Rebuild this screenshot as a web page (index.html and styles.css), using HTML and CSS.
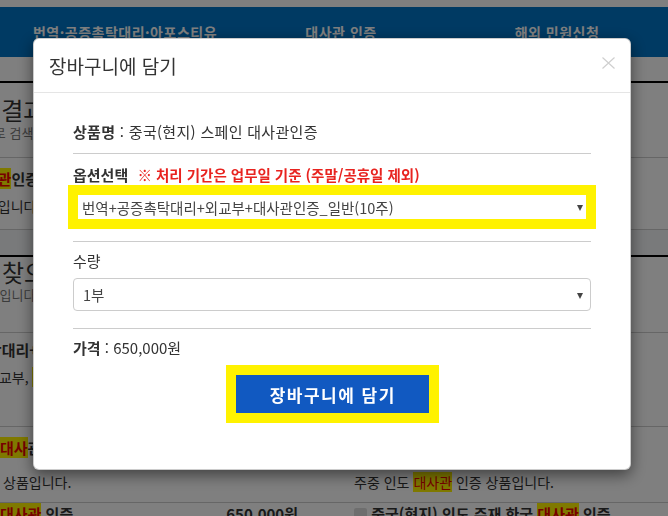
FILE: index.html
```html
<!DOCTYPE html>
<html lang="ko">
<head>
    <meta charset="utf-8">
    <title>장바구니에 담기</title>
    <link rel="stylesheet" href="styles.css">
</head>
<body>

    <div class="top-bar"></div>
    <div class="gnb">
        <a>번역·공증촉탁대리·아포스티유</a>
        <a>대사관 인증</a>
        <a>해외 민원신청</a>
    </div>
    <div class="sub-bar"></div>

    <div class="result">
        <h2 class="result-title shift-title">검색결과</h2>
        <p class="result-desc shift-desc">대사관으로 검색된 상품입니다.</p>
        <div class="list">
            <div class="row row-first">
                <div class="item">
                    <div class="item-title cut-30"><mark>대사관</mark>인증 번역</div>
                    <div class="item-desc cut-28">상품입니다.</div>
                </div>
                <div class="item"></div>
            </div>
        </div>
        <div class="result-more"></div>
    </div>

    <div class="result">
        <h2 class="result-title">찾으시는 상품이 없으신가요?</h2>
        <p class="result-desc cut-52">관련 상품입니다.</p>
        <div class="list">
            <div class="row row-a">
                <div class="item">
                    <div class="item-title cut-90">번역+공증촉탁대리+외교부</div>
                    <div class="item-desc cut-14">외교부, <mark>대사관</mark> 인증 상품입니다.</div>
                </div>
                <div class="item"></div>
            </div>
            <div class="row row-b">
                <div class="item">
                    <div class="item-title"><mark>대사</mark>관 인증</div>
                    <div class="item-desc indent">상품입니다.</div>
                </div>
                <div class="item">
                    <div class="item-title">&nbsp;</div>
                    <div class="item-desc">주중 인도 <mark>대사관</mark> 인증 상품입니다.</div>
                </div>
            </div>
            <div class="row row-c">
                <div class="item item-head">
                    <div class="item-title"><mark>대사관</mark> 인증</div>
                    <div class="item-price">650,000원</div>
                </div>
                <div class="item">
                    <div class="item-title"><span class="check"></span> 중국(현지) 인도 주재 한국 <mark>대사관</mark> 인증</div>
                </div>
            </div>
        </div>
    </div>

    <div class="backdrop"></div>

    <div class="modal">
        <div class="modal-header">
            <h4 class="modal-title">장바구니에 담기</h4>
            <button class="close">
                <svg width="13" height="12" viewBox="0 0 13 12">
                    <path d="M0.5 0.5 L12.5 11.5 M12.5 0.5 L0.5 11.5" stroke="#cfcfcf" stroke-width="1.2" fill="none"/>
                </svg>
            </button>
        </div>
        <div class="modal-body">
            <p class="line product"><b>상품명</b> : 중국(현지) 스페인 대사관인증</p>
            <hr class="divider">
            <p class="line option-label"><b>옵션선택</b> <span class="notice">※ 처리 기간은 업무일 기준 (주말/공휴일 제외)</span></p>
            <div class="select-wrap marked">
                <select class="select">
                    <option>번역+공증촉탁대리+외교부+대사관인증_일반(10주)</option>
                </select>
            </div>
            <hr class="divider">
            <p class="line qty-label">수량</p>
            <div class="select-wrap">
                <select class="select">
                    <option>1부</option>
                </select>
            </div>
            <hr class="divider">
            <p class="line price"><b>가격</b> : 650,000원</p>
            <div class="actions">
                <button class="btn-cart">장바구니에 담기</button>
            </div>
        </div>
    </div>

</body>
</html>
```

FILE: styles.css
```css
body {
    margin: 0;
    font-family: "Noto Sans CJK KR", "Noto Sans", sans-serif;
    color: #333;
    background-color: white;
    overflow: hidden;
    height: 516px;
}

/* page behind the dialog */
.top-bar {
    height: 7px;
    background-color: white;
}

.gnb {
    height: 50px;
    background-color: #0074c6;
    display: grid;
    grid-template-columns: repeat(3, 216px);
    padding-left: 17px;
    align-items: center;
}

.gnb a {
    color: white;
    font-size: 14px;
    font-weight: bold;
    text-align: center;
    letter-spacing: 0.5px;
}

.sub-bar {
    height: 24px;
    border-bottom: 2px solid black;
}

.result {
    border-bottom: 2px solid black;
}

.result-title {
    font-size: 24px;
    font-weight: normal;
    line-height: 30px;
    margin: 0;
    padding-left: 2px;
    white-space: nowrap;
}

.shift-title {
    margin-top: 12px;
    margin-left: -45px;
}

.result-desc {
    font-size: 13px;
    line-height: 16px;
    color: #777;
    margin: 0 0 29px;
    white-space: nowrap;
}

.shift-desc {
    margin-bottom: 16px;
    text-indent: -54px;
}

.list {
    border-top: 1px solid #ccc;
}

.row {
    display: grid;
    grid-template-columns: 354px 1fr;
    border-bottom: 1px solid #ccc;
}

.row-first {
    padding: 10px 0 13px;
    border-bottom: none;
}

.row-a {
    padding: 6px 0 39px;
}

.row-b {
    padding: 10px 0 10px;
}

.row-c {
    padding: 0;
    border-bottom: none;
}

.item-head {
    display: flex;
    justify-content: space-between;
    padding-right: 56px;
}

.item-title {
    font-size: 15px;
    font-weight: bold;
    line-height: 22px;
    white-space: nowrap;
}

.item-price {
    font-size: 15px;
    font-weight: bold;
    line-height: 22px;
}

.item-desc {
    font-size: 14px;
    line-height: 20px;
    margin-top: 6px;
    white-space: nowrap;
}

.row-b .item-desc {
    margin-top: 13px;
}

.indent {
    padding-left: 3px;
}

.cut-14 { text-indent: -14px; }
.cut-28 { text-indent: -28px; }
.cut-30 { text-indent: -30px; }
.cut-52 { text-indent: -52px; }
.cut-90 { text-indent: -90px; }

mark {
    background-color: #fff200;
    color: #e00;
}

.check {
    display: inline-block;
    width: 13px;
    height: 13px;
    background-color: #ddd;
    border-radius: 2px;
    vertical-align: -1px;
}

.result-more {
    height: 25px;
    border-top: 1px solid #ccc;
    background-color: #f2f4f6;
}

/* dialog */
.backdrop {
    position: fixed;
    left: 0;
    top: 0;
    right: 0;
    bottom: 0;
    background-color: rgba(0, 0, 0, 0.5);
}

.modal {
    position: fixed;
    top: 38px;
    left: 33px;
    width: 596px;
    background-color: white;
    border: 1px solid rgba(0, 0, 0, 0.2);
    border-radius: 6px;
    box-shadow: 0 5px 15px rgba(0, 0, 0, 0.5);
}

.modal-header {
    display: flex;
    justify-content: space-between;
    align-items: flex-start;
    padding: 14px 15px 13px 15px;
    border-bottom: 1px solid #e5e5e5;
}

.modal-title {
    margin: 0;
    font-size: 19px;
    font-weight: normal;
    line-height: 26px;
    color: #333;
}

.close {
    border: none;
    background: none;
    padding: 0;
    margin-top: 4px;
    width: 13px;
    height: 12px;
    line-height: 0;
}

.modal-body {
    padding: 29px 39px 56px 39px;
}

.line {
    margin: 0;
    font-size: 15px;
    line-height: 20px;
    color: #333;
}

.product {
    letter-spacing: 0.3px;
}

.divider {
    border: none;
    border-top: 1px solid #ccc;
    margin: 0;
}

.product + .divider {
    margin-top: 11px;
}

.option-label {
    margin-top: 11px;
}

.notice {
    color: #e8231f;
    font-size: 14.5px;
    font-weight: bold;
    margin-left: 5px;
}

.select-wrap {
    position: relative;
    margin-top: 7px;
}

.select-wrap::after {
    content: "";
    position: absolute;
    right: 8px;
    top: 50%;
    margin-top: -2px;
    border-left: 3.5px solid transparent;
    border-right: 3.5px solid transparent;
    border-top: 6px solid #444;
}

.select {
    display: block;
    width: 100%;
    height: 33px;
    appearance: none;
    -webkit-appearance: none;
    background-color: white;
    border: 1px solid #ccc;
    border-radius: 4px;
    padding: 0 9px;
    font-family: "Noto Sans CJK KR", "Noto Sans", sans-serif;
    font-size: 14.5px;
    color: #444;
}

.marked {
    margin-top: 5px;
}

.marked .select {
    height: 34px;
    border: 5px solid #fff200;
    border-radius: 0;
    outline: 5px solid #fff200;
    padding: 0 4px;
}

.marked + .divider {
    margin-top: 17px;
}

.qty-label {
    margin-top: 9px;
}

.select-wrap + .divider {
    margin-top: 17px;
}

.price {
    margin-top: 9px;
}

.actions {
    display: flex;
    justify-content: center;
    margin-top: 17px;
}

.btn-cart {
    width: 193px;
    height: 38px;
    border: none;
    outline: 10px solid #fff200;
    background-color: #1159c1;
    color: white;
    font-family: "Noto Sans CJK KR", "Noto Sans", sans-serif;
    font-size: 17px;
    font-weight: bold;
    letter-spacing: 1.5px;
    padding: 0 0 0 1.5px;
}
```
